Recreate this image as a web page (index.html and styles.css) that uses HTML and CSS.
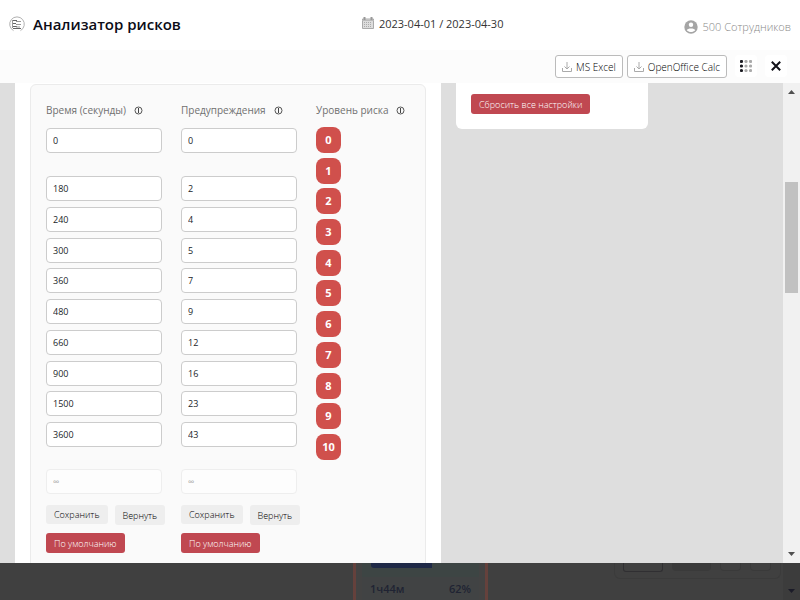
FILE: index.html
```
<!DOCTYPE html>
<html lang="ru">
<head>
    <meta charset="utf-8">
    <title>Анализатор рисков</title>
    <link rel="stylesheet" href="styles.css">
</head>
<body>
    <div class="modal">
        <header class="header">
            <h1 class="title">
                <svg class="logo" viewBox="0 0 16 16">
                    <path d="M4.500 14.600A7.300 7.300 0 1 1 11.500 14.600" fill="none" stroke="#b0b0b0"/>
                    <path d="M4 4.500h4M4 7.500h3M4 10.500h4M4 12.500h8" stroke="#666"/>
                    <path d="M3.500 4v8M7 5.500h5M7 8.500h5M7 11h4" stroke="#999"/>
                </svg>
                Анализатор рисков
            </h1>
            <div class="period">
                <svg class="calendar" viewBox="0 0 12 12">
                    <path d="M.5 2h11v9.500H.5z" fill="#ddd" stroke="#aaa"/>
                    <path d="M0 3.500h12" stroke="#bbb"/>
                    <path d="M2.500 0v3M9.500 0v3" stroke="#999" stroke-width="2"/>
                    <path d="M2 5.500h8M2 7.500h8M2 9.500h8" stroke="#aaa" stroke-dasharray="1 1"/>
                </svg>
                2023-04-01 / 2023-04-30
            </div>
            <div class="staff">
                <svg class="user" viewBox="0 0 14 14">
                    <circle cx="7" cy="7" r="6.700" fill="#a5a5a5"/>
                    <circle cx="7" cy="4.700" r="2.200" fill="#fff"/>
                    <path d="M2.800 10.300C3.300 7.900 10.700 7.900 11.200 10.300 9 12.700 5 12.700 2.800 10.300z" fill="#fff"/>
                </svg>
                500 Сотрудников
            </div>
        </header>

        <div class="toolbar">
            <button class="export">
                <svg class="download" viewBox="0 0 10 10"><path d="M.5 6v3.500h9V6M5 0v7M2.500 4.500L5 7l2.500-2.500" fill="none" stroke="#aaa"/></svg>
                MS Excel
            </button>
            <button class="export">
                <svg class="download" viewBox="0 0 10 10"><path d="M.5 6v3.500h9V6M5 0v7M2.500 4.500L5 7l2.500-2.500" fill="none" stroke="#aaa"/></svg>
                OpenOffice Calc
            </button>
            <button class="tool" aria-label="Столбцы">
                <svg class="dots" viewBox="0 0 12 12">
                    <g fill="#1b1b22"><circle cx="1.500" cy="1.500" r="1.600"/><circle cx="1.500" cy="6" r="1.600"/><circle cx="1.500" cy="10.500" r="1.600"/></g>
                    <g fill="#aaa"><circle cx="6" cy="1.500" r="1.600"/><circle cx="6" cy="6" r="1.600"/><circle cx="6" cy="10.500" r="1.600"/><circle cx="10.500" cy="1.500" r="1.600"/><circle cx="10.500" cy="6" r="1.600"/><circle cx="10.500" cy="10.500" r="1.600"/></g>
                </svg>
            </button>
            <button class="tool" aria-label="Закрыть">
                <svg class="close" viewBox="0 0 10 10"><path d="M.8.8l8.400 8.400M9.200.8L.8 9.200" stroke="#111118" stroke-width="2"/></svg>
            </button>
        </div>

        <div class="content">
            <main class="settings">
                <form class="card">
                    <section class="column">
                        <h2 class="label" id="time">Время (секунды) <svg class="info" viewBox="0 0 9 9"><circle cx="4.500" cy="4.500" r="3.500" fill="none" stroke="#555"/><path d="M4.500 2v5" stroke="#444"/></svg></h2>
                        <input class="field" aria-labelledby="time" value="0">
                        <div class="fields">
                            <input class="field" aria-labelledby="time" value="180">
                            <input class="field" aria-labelledby="time" value="240">
                            <input class="field" aria-labelledby="time" value="300">
                            <input class="field" aria-labelledby="time" value="360">
                            <input class="field" aria-labelledby="time" value="480">
                            <input class="field" aria-labelledby="time" value="660">
                            <input class="field" aria-labelledby="time" value="900">
                            <input class="field" aria-labelledby="time" value="1500">
                            <input class="field" aria-labelledby="time" value="3600">
                        </div>
                        <input class="field" aria-labelledby="time" value="∞" disabled>
                        <div class="actions">
                            <button type="button" class="btn">Сохранить</button>
                            <button type="button" class="btn revert">Вернуть</button>
                        </div>
                        <button type="button" class="btn danger">По умолчанию</button>
                    </section>

                    <section class="column">
                        <h2 class="label" id="warn">Предупреждения <svg class="info" viewBox="0 0 9 9"><circle cx="4.500" cy="4.500" r="3.500" fill="none" stroke="#555"/><path d="M4.500 2v5" stroke="#444"/></svg></h2>
                        <input class="field" aria-labelledby="warn" value="0">
                        <div class="fields">
                            <input class="field" aria-labelledby="warn" value="2">
                            <input class="field" aria-labelledby="warn" value="4">
                            <input class="field" aria-labelledby="warn" value="5">
                            <input class="field" aria-labelledby="warn" value="7">
                            <input class="field" aria-labelledby="warn" value="9">
                            <input class="field" aria-labelledby="warn" value="12">
                            <input class="field" aria-labelledby="warn" value="16">
                            <input class="field" aria-labelledby="warn" value="23">
                            <input class="field" aria-labelledby="warn" value="43">
                        </div>
                        <input class="field" aria-labelledby="warn" value="∞" disabled>
                        <div class="actions">
                            <button type="button" class="btn">Сохранить</button>
                            <button type="button" class="btn revert">Вернуть</button>
                        </div>
                        <button type="button" class="btn danger">По умолчанию</button>
                    </section>

                    <section class="column">
                        <h2 class="label">Уровень риска <svg class="info" viewBox="0 0 9 9"><circle cx="4.500" cy="4.500" r="3.500" fill="none" stroke="#555"/><path d="M4.500 2v5" stroke="#444"/></svg></h2>
                        <div class="levels">
                            <span class="level">0</span>
                            <span class="level">1</span>
                            <span class="level">2</span>
                            <span class="level">3</span>
                            <span class="level">4</span>
                            <span class="level">5</span>
                            <span class="level">6</span>
                            <span class="level">7</span>
                            <span class="level">8</span>
                            <span class="level">9</span>
                            <span class="level">10</span>
                        </div>
                    </section>
                </form>
            </main>
            <aside class="reset">
                <button class="btn danger">Сбросить все настройки</button>
            </aside>
            <div class="scrollbar">
                <svg class="arrow" viewBox="0 0 7 4"><path d="M0 4L3.500 0 7 4z"/></svg>
                <div class="thumb"></div>
                <svg class="arrow" viewBox="0 0 7 4"><path d="M0 0h7L3.500 4z"/></svg>
            </div>
        </div>
    </div>

    <!-- page behind the modal, dimmed -->
    <div class="backdrop">
        <div class="tile">
            <div class="progress"><div class="bar"></div></div>
            <div class="stats"><span>1ч44м</span><span>62%</span></div>
        </div>
        <div class="pager">
            <span class="page-size"></span>
            <span class="page-count"></span>
            <span class="page-nav"></span>
            <span class="page-nav"></span>
        </div>
        <div class="scrollbar dim">
            <svg class="arrow" viewBox="0 0 7 4"><path d="M0 0h7L3.500 4z"/></svg>
        </div>
    </div>
</body>
</html>
```
FILE: styles.css
```
* {
    box-sizing: border-box;
}

body {
    margin: 0;
    height: 100vh;
    display: flex;
    flex-direction: column;
    overflow: hidden;
    background: #404040;
    font-family: "Open Sans", "Noto Sans", sans-serif;
    font-size: 11px;
    color: #212529;
}

button, input {
    font-family: inherit;
}

svg {
    flex: none;
}

.modal {
    flex: 1;
    min-height: 0;
    display: flex;
    flex-direction: column;
    background: #fff;
}

.header {
    flex: none;
    height: 50px;
    padding: 0 9px;
    display: flex;
    justify-content: space-between;
    align-items: center;
}

.title {
    margin: 0;
    padding-bottom: 2px;
    display: flex;
    align-items: center;
    gap: 8px;
    font-size: 15px;
    font-weight: 600;
    color: #0c0c16;
}

.logo {
    width: 16px;
    height: 16px;
}

.period {
    display: flex;
    align-items: center;
    gap: 5px;
    padding-bottom: 4px;
    color: #333;
}

.calendar {
    width: 12px;
    height: 12px;
}

.staff {
    display: flex;
    align-items: center;
    gap: 4px;
    padding-top: 3px;
    font-weight: 300;
    color: #888;
}

.user {
    width: 14px;
    height: 14px;
}

.toolbar {
    flex: none;
    height: 33px;
    padding: 5px 13px 0 0;
    display: flex;
    justify-content: flex-end;
    align-items: flex-start;
    gap: 4px;
    background: #fcfcfc;
}

.export {
    height: 23px;
    padding: 0 6px;
    display: flex;
    align-items: center;
    gap: 4px;
    background: #fff;
    border: 1px solid #bbb;
    border-radius: 3px;
    font-size: 10px;
    font-weight: 300;
    color: #000;
}

.download {
    width: 10px;
    height: 10px;
}

.tool {
    width: 22px;
    height: 22px;
    margin-left: 4px;
    padding: 0;
    display: flex;
    align-items: center;
    justify-content: center;
    background: #fff;
    border: 0;
    border-radius: 4px;
}

.dots {
    width: 12px;
    height: 12px;
}

.close {
    width: 10px;
    height: 10px;
}

.content {
    flex: 1;
    min-height: 0;
    padding-left: 15px;
    display: flex;
    align-items: flex-start;
    overflow: hidden;
    background: #dedede;
}

.settings {
    padding: 1px 15px 0;
    background: #fff;
}

.card {
    height: 520px;
    padding: 15px;
    display: flex;
    gap: 19px;
    background: #fafafa;
    border: 1px solid #ebebeb;
    border-radius: 6px;
}

.column {
    width: 116px;
    display: flex;
    flex-direction: column;
}

.column:last-child {
    width: 94px;
}

.label {
    height: 20px;
    margin: 0 0 7px;
    display: flex;
    align-items: center;
    gap: 8px;
    font-size: 10px;
    font-weight: 400;
    white-space: nowrap;
    color: #707070;
}

.info {
    width: 9px;
    height: 9px;
}

.field {
    width: 100%;
    height: 25px;
    flex: none;
    padding: 0 6px;
    background: #fff;
    border: 1px solid #ccc;
    border-radius: 4px;
    font-size: 9px;
    color: #212529;
}

.label + .field {
    margin-top: 1px;
}

.field:disabled {
    border-color: #eee;
    background: #fdfdfd;
    color: #aaa;
}

.fields {
    height: 271px;
    margin: 23px 0 22px;
    display: flex;
    flex-direction: column;
    justify-content: space-between;
}

.actions {
    margin: 11px 0 8px;
    display: flex;
    gap: 7px;
}

.btn {
    height: 19px;
    padding: 0 8px;
    flex: none;
    align-self: flex-start;
    background: #eee;
    border: 0;
    border-radius: 3px;
    font-size: 9px;
    font-weight: 300;
    white-space: nowrap;
    color: #000;
}

.revert {
    height: 20px;
}

.danger {
    height: 20px;
    background: #c04851;
    color: #fff;
}

.levels {
    height: 333px;
    display: flex;
    flex-direction: column;
    justify-content: space-between;
}

.level {
    width: 25px;
    height: 26px;
    border-radius: 8px;
    background: #d0504c;
    font-weight: 700;
    line-height: 26px;
    text-align: center;
    color: #fff;
}

.reset {
    width: 192px;
    margin-left: 15px;
    padding: 11px 15px 15px;
    display: flex;
    background: #fff;
    border-radius: 0 0 6px 6px;
}

.scrollbar {
    width: 17px;
    flex: none;
    align-self: stretch;
    margin-left: auto;
    padding: 7px 2px;
    display: flex;
    flex-direction: column;
    align-items: center;
    background: #f1f1f1;
}

.arrow {
    width: 7px;
    height: 4px;
    fill: #505050;
}

.thumb {
    align-self: stretch;
    height: 111px;
    margin: 88px 0 auto;
    background: #c1c1c1;
}

.backdrop {
    flex: none;
    height: 37px;
    display: flex;
}

.tile {
    width: 135px;
    margin-left: 353px;
    padding: 0 6px;
    border: solid #65413c;
    border-width: 0 3px;
    background: #434343;
}

.progress {
    height: 14px;
    padding: 0 9px;
    background: #3d4544;
}

.bar {
    width: 61px;
    height: 5px;
    border-radius: 0 0 0 3px;
    background: #1f2947;
}

.stats {
    height: 23px;
    padding: 0 8px;
    display: flex;
    justify-content: space-between;
    align-items: center;
    background: #414344;
    font-weight: 600;
    color: #1f2333;
}

.pager {
    width: 167px;
    height: 16px;
    margin-left: auto;
    padding: 0 8px;
    display: flex;
    align-items: flex-start;
    gap: 9px;
    border: 1px solid #3b3b3b;
    border-top: 0;
    border-radius: 0 0 6px 6px;
}

.page-size {
    width: 40px;
    height: 9px;
    border: 1px solid #302f32;
    border-top: 0;
    border-radius: 0 0 3px 3px;
}

.page-count {
    width: 39px;
    height: 8px;
    border-radius: 0 0 4px 4px;
    background: #3a3a3a;
}

.page-nav {
    width: 21px;
    height: 8px;
    border: 1px solid #3a3a3a;
    border-top: 0;
    border-radius: 0 0 4px 4px;
}

.dim {
    margin-left: 2px;
    justify-content: flex-end;
    background: #3c3c3c;
}

.dim .arrow {
    fill: #1b1b28;
}
```
